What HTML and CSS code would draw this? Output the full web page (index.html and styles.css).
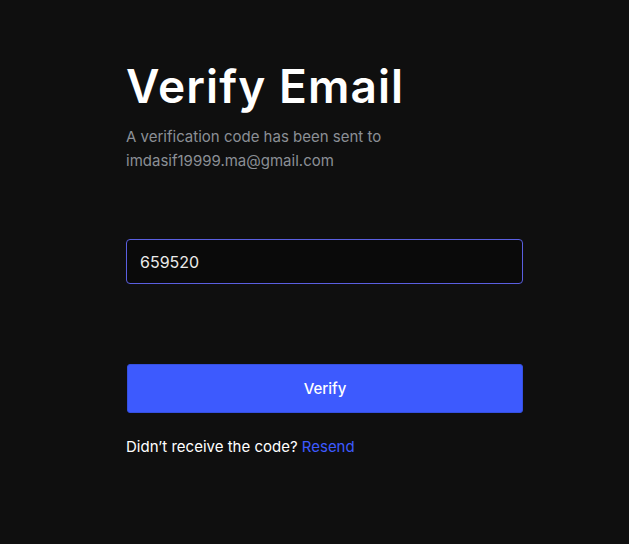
FILE: index.html
```html
<!DOCTYPE html>
<html lang="en">
<head>
<meta charset="utf-8">
<title>Verify Email</title>
<link rel="stylesheet" href="styles.css">
</head>
<body>
<main class="page">
  <section class="card">
    <h1 class="title">Verify Email</h1>
    <p class="subtitle">A verification code has been sent to<br>imdasif19999.ma@gmail.com</p>
    <form class="form">
      <input class="code-input" type="text" value="659520">
      <button class="verify-btn" type="button">Verify</button>
    </form>
    <p class="resend">Didn’t receive the code? <a class="resend-link" href="#">Resend</a></p>
  </section>
</main>
</body>
</html>
```

FILE: styles.css
```css
* { box-sizing: border-box; }
html, body {
  margin: 0;
  padding: 0;
  background: #0f0f0f;
  height: 100%;
}
body {
  font-family: Inter, "Noto Sans", sans-serif;
  color: #ffffff;
}
.page {
  display: flex;
  justify-content: flex-start;
  padding-top: 56px;
  padding-left: 126px;
}
.card {
  width: 397px;
  display: flex;
  flex-direction: column;
}
.title {
  margin: 0;
  font-size: 46px;
  line-height: 60px;
  font-weight: 600;
  letter-spacing: 1.1px;
  color: #ffffff;
}
.subtitle {
  margin: 9px 0 0;
  font-size: 15px;
  line-height: 24px;
  color: #8b8f96;
}
.form {
  display: flex;
  flex-direction: column;
  margin-top: 66px;
}
.code-input {
  height: 45px;
  width: 100%;
  background: #0a0a0a;
  border: 1px solid #5a5fe0;
  border-radius: 4px;
  padding: 0 13px;
  font-family: inherit;
  font-size: 16px;
  color: #eaeaea;
  outline: none;
}
.verify-btn {
  margin-top: 80px;
  margin-left: 1px;
  height: 49px;
  width: calc(100% - 1px);
  background: #3d5afe;
  border: 1px solid #3550e0;
  border-radius: 3px;
  color: #ffffff;
  font-family: inherit;
  font-size: 15px;
  font-weight: 500;
}
.resend {
  margin: 24px 0 0;
  font-size: 15px;
  line-height: 20px;
  color: #ffffff;
}
.resend-link {
  color: #3d5afe;
  text-decoration: none;
}
```
